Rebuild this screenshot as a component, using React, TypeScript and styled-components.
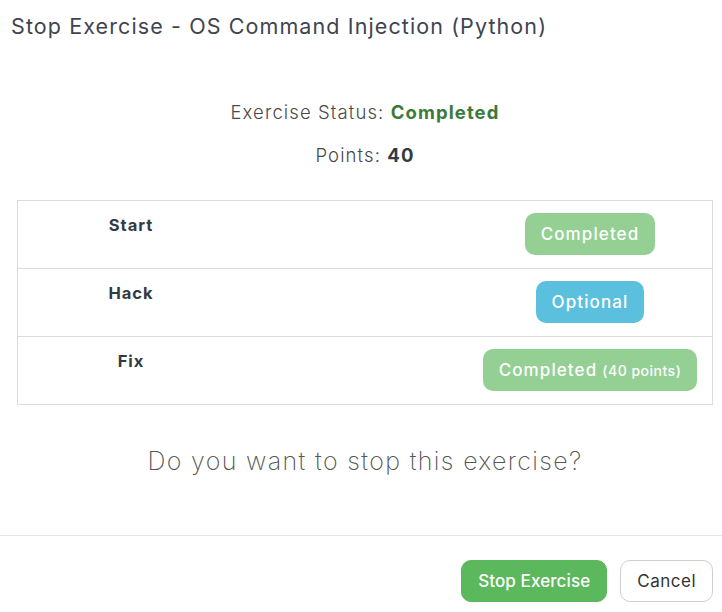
import React from "react";
import styled, { createGlobalStyle } from "styled-components";

const Global = createGlobalStyle`
  html, body { margin: 0; padding: 0; background: #fff; }
  body { font-family: Inter, "Noto Sans", "Liberation Sans", sans-serif; overflow: hidden; }
  * { box-sizing: border-box; }
`;

const Modal = styled.div`
  width: 730px;
  background: #fff;
`;

const Header = styled.div`
  padding: 11px 11px;
`;

const Title = styled.h4`
  margin: 0;
  font-size: 21.5px;
  line-height: 30px;
  letter-spacing: 1.1px;
  font-weight: 400;
  color: #3f4450;
  white-space: nowrap;
`;

const Body = styled.div`
  padding: 0 17px;
  display: flex;
  flex-direction: column;
  align-items: stretch;
`;

const InfoLine = styled.p<{ $top: number }>`
  margin: ${(p) => p.$top}px 0 0;
  text-align: center;
  font-size: 18.5px;
  line-height: 28px;
  letter-spacing: 1.1px;
  font-weight: 300;
  color: #4a4a4a;
`;

const Strong = styled.strong<{ $color: string }>`
  font-weight: 700;
  color: ${(p) => p.$color};
`;

const Table = styled.div`
  margin-top: 31px;
  border: 1px solid #dcdcdc;
`;

const Row = styled.div`
  display: grid;
  grid-template-columns: 226px 1fr 244px;
  border-top: 1px solid #dcdcdc;
  &:first-child { border-top: none; }
`;

const LabelCell = styled.div`
  padding: 12px 8px;
  text-align: center;
  font-size: 16.5px;
  line-height: 24px;
  letter-spacing: 1px;
  font-weight: 700;
  color: #343a44;
`;

const BadgeCell = styled.div`
  padding: 12px 0 13px;
  display: flex;
  justify-content: center;
`;

const Badge = styled.span<{ $variant: "done" | "info" }>`
  display: inline-flex;
  align-items: baseline;
  height: 42px;
  line-height: 42px;
  padding: 0 16px;
  border-radius: 10px;
  font-size: 17px;
  letter-spacing: 1.1px;
  font-weight: 500;
  color: #fff;
  white-space: nowrap;
  background: ${(p) => (p.$variant === "done" ? "#5cb85c" : "#5bc0de")};
  opacity: ${(p) => (p.$variant === "done" ? 0.65 : 1)};
`;

const Small = styled.small`
  font-size: 14px;
  letter-spacing: 0.5px;
  margin-left: 5px;
`;

const Question = styled.p`
  margin: 38px 0 0;
  text-align: center;
  font-size: 25px;
  line-height: 36px;
  letter-spacing: 1.35px;
  font-weight: 200;
  color: #555;
`;

const Footer = styled.div`
  margin-top: 56px;
  border-top: 1px solid #e5e5e5;
  padding: 24px 17px 12px;
  display: flex;
  justify-content: flex-end;
  gap: 13px;
`;

const Button = styled.button<{ $primary?: boolean }>`
  height: 42px;
  padding: 0 16px;
  border-radius: 10px;
  font-family: inherit;
  font-size: 17px;
  letter-spacing: ${(p) => (p.$primary ? 0.1 : 0.5)}px;
  font-weight: ${(p) => (p.$primary ? 500 : 400)};
  color: ${(p) => (p.$primary ? "#fff" : "#333")};
  background: ${(p) => (p.$primary ? "#5cb85c" : "#fff")};
  border: 1px solid ${(p) => (p.$primary ? "#5cb85c" : "#cfcfcf")};
  cursor: pointer;
`;

const steps: { label: string; variant: "done" | "info"; text: string; extra?: string }[] = [
  { label: "Start", variant: "done", text: "Completed" },
  { label: "Hack", variant: "info", text: "Optional" },
  { label: "Fix", variant: "done", text: "Completed", extra: "(40 points)" },
];

export default function App() {
  return (
    <>
      <Global />
      <Modal>
        <Header>
          <Title>Stop Exercise - OS Command Injection (Python)</Title>
        </Header>
        <Body>
          <InfoLine $top={46}>
            Exercise Status: <Strong $color="#3c7a3c">Completed</Strong>
          </InfoLine>
          <InfoLine $top={15}>
            Points: <Strong $color="#343a44">40</Strong>
          </InfoLine>
          <Table>
            {steps.map((s) => (
              <Row key={s.label}>
                <LabelCell>{s.label}</LabelCell>
                <div />
                <BadgeCell>
                  <Badge $variant={s.variant}>
                    {s.text}
                    {s.extra && <Small>{s.extra}</Small>}
                  </Badge>
                </BadgeCell>
              </Row>
            ))}
          </Table>
          <Question>Do you want to stop this exercise?</Question>
        </Body>
        <Footer>
          <Button $primary>Stop Exercise</Button>
          <Button>Cancel</Button>
        </Footer>
      </Modal>
    </>
  );
}
